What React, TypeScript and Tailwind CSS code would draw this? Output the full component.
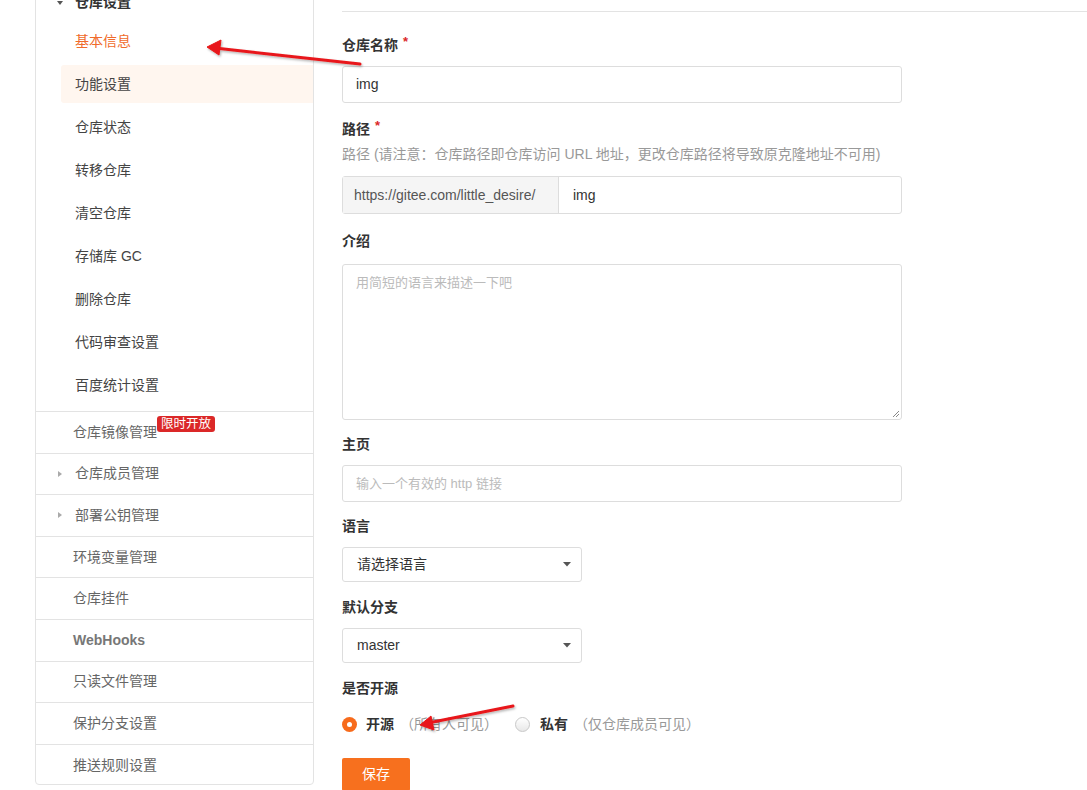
import React from 'react';

const subItems = ['基本信息', '功能设置', '仓库状态', '转移仓库', '清空仓库', '存储库 GC', '删除仓库', '代码审查设置', '百度统计设置'];

const groupItems: { label: string; caret?: boolean; badge?: string }[] = [
  { label: '仓库镜像管理', badge: '限时开放' },
  { label: '仓库成员管理', caret: true },
  { label: '部署公钥管理', caret: true },
  { label: '环境变量管理' },
  { label: '仓库挂件' },
  { label: 'WebHooks' },
  { label: '只读文件管理' },
  { label: '保护分支设置' },
  { label: '推送规则设置' },
];

const Caret: React.FC<{ down?: boolean }> = ({ down }) => (
  <svg width="8" height="8" viewBox="0 0 8 8" className="shrink-0">
    {down ? <path d="M1 2 L7 2 L4 6 Z" fill="#555" /> : <path d="M2 1 L6 4 L2 7 Z" fill="#aaa" />}
  </svg>
);

const Sidebar: React.FC = () => (
  <div className="w-[279px] shrink-0 -mt-[18px] h-[803px] border border-[#e3e3e3] rounded-b-[4px] bg-white">
    <div className="h-[39px] flex items-center pl-[20px] gap-[11px] text-[14px] font-bold text-[#333]">
      <Caret down />
      <span>仓库设置</span>
    </div>
    <div className="flex flex-col gap-[5px] pl-[25px] pb-[7px]">
      {subItems.map((s, i) => (
        <div
          key={s}
          className={`h-[38px] flex items-center pl-[14px] text-[14px] rounded-l-[3px] ${i === 0 ? 'text-[#f06b2b]' : 'text-[#444]'} ${i === 1 ? 'bg-[#fff6ef]' : ''}`}
        >
          {s}
        </div>
      ))}
    </div>
    {groupItems.map(g => (
      <div key={g.label} className="h-[41.6px] border-t border-[#e3e3e3] flex items-center text-[14px] text-[#666]">
        {g.caret ? (
          <div className="flex items-center pl-[20px] gap-[11px]">
            <Caret />
            <span>{g.label}</span>
          </div>
        ) : (
          <div className={`pl-[37px] flex items-center ${g.label === 'WebHooks' ? 'font-bold text-[#777]' : ''}`}>
            <span>{g.label}</span>
            {g.badge && (
              <span className="relative -top-[8px] bg-[#db2828] text-white text-[12.5px] leading-[16px] px-[4px] rounded-[3px]">{g.badge}</span>
            )}
          </div>
        )}
      </div>
    ))}
  </div>
);

const Label: React.FC<{ text: string; required?: boolean }> = ({ text, required }) => (
  <div className="text-[14px] font-bold text-[#333] leading-[20px] flex items-start">
    {text}
    {required && <span className="text-[#db2828] ml-[5px] text-[13px] leading-[14px]">*</span>}
  </div>
);

const Select: React.FC<{ value: string }> = ({ value }) => (
  <div className="w-[240px] h-[35px] border border-[#ddd] rounded-[3px] flex items-center justify-between pl-[14px] pr-[10px] text-[14px] text-[#333]">
    <span>{value}</span>
    <svg width="8" height="5" viewBox="0 0 8 5"><path d="M0 0 L8 0 L4 4.5 Z" fill="#555" /></svg>
  </div>
);

const Radio: React.FC<{ checked?: boolean }> = ({ checked }) =>
  checked ? (
    <span className="block w-[15px] h-[15px] rounded-full bg-[#f76b1c] flex items-center justify-center shrink-0">
      <span className="block w-[5px] h-[5px] rounded-full bg-white" />
    </span>
  ) : (
    <span className="block w-[15px] h-[15px] rounded-full border border-[#c8c8c8] bg-gradient-to-b from-white to-[#e8e8e8] shrink-0" />
  );

const App: React.FC = () => {
  return (
    <div
      className="relative w-[1087px] h-[790px] overflow-hidden bg-white flex"
      style={{ fontFamily: '"Liberation Sans", "Noto Sans CJK SC", sans-serif' }}
    >
      <div className="w-[35px] shrink-0" />
      <Sidebar />
      <div className="flex-1 pl-[28px]">
        <div className="mt-[11px] border-t border-[#e3e3e3]" />
        <div className="w-[560px] flex flex-col pt-[23px]">
          <Label text="仓库名称" required />
          <div className="mt-[11px] h-[37px] border border-[#ddd] rounded-[3px] flex items-center px-[13px] text-[14px] text-[#333]">img</div>

          <div className="mt-[16px]"><Label text="路径" required /></div>
          <div className="mt-[5px] text-[14px] text-[#999] leading-[20px]">路径 (请注意：仓库路径即仓库访问 URL 地址，更改仓库路径将导致原克隆地址不可用)</div>
          <div className="mt-[12px] h-[38px] border border-[#ddd] rounded-[3px] flex text-[14px] text-[#333]">
            <div className="w-[216px] bg-[#f5f5f5] border-r border-[#ddd] flex items-center pl-[11px] text-[#555]">https://gitee.com/little_desire/</div>
            <div className="flex items-center pl-[14px]">img</div>
          </div>

          <div className="mt-[17px]"><Label text="介绍" /></div>
          <div className="mt-[13px] h-[156px] border border-[#ddd] rounded-[3px] relative px-[13px] pt-[8px] text-[13px] text-[#bbb]">
            用简短的语言来描述一下吧
            <svg width="8" height="8" viewBox="0 0 8 8" className="absolute right-[1px] bottom-[1px]">
              <path d="M7 1 L1 7 M7 4 L4 7" stroke="#888" strokeWidth="1" />
            </svg>
          </div>

          <div className="mt-[14px]"><Label text="主页" /></div>
          <div className="mt-[11px] h-[37px] border border-[#ddd] rounded-[3px] flex items-center px-[13px] text-[13px] text-[#bbb]">输入一个有效的 http 链接</div>

          <div className="mt-[14px]"><Label text="语言" /></div>
          <div className="mt-[11px]"><Select value="请选择语言" /></div>

          <div className="mt-[15px]"><Label text="默认分支" /></div>
          <div className="mt-[11px]"><Select value="master" /></div>

          <div className="mt-[15px]"><Label text="是否开源" /></div>
          <div className="mt-[16px] flex items-center text-[14px]">
            <Radio checked />
            <span className="ml-[9px] font-bold text-[#333]">开源</span>
            <span className="ml-[6px] text-[#999]">（所有人可见）</span>
            <span className="ml-[17px]"><Radio /></span>
            <span className="ml-[10px] font-bold text-[#333]">私有</span>
            <span className="ml-[6px] text-[#999]">（仅仓库成员可见）</span>
          </div>

          <div className="mt-[23px]">
            <button className="w-[68px] h-[33px] bg-[#f7701e] text-white text-[14px] rounded-[2px]">保存</button>
          </div>
        </div>
      </div>

      <svg className="absolute inset-0 pointer-events-none" width="1087" height="790">
        <defs>
          <filter id="sh" x="-10%" y="-50%" width="120%" height="200%">
            <feDropShadow dx="1" dy="1.5" stdDeviation="1.2" floodColor="#000" floodOpacity="0.3" />
          </filter>
        </defs>
        <g filter="url(#sh)" fill="#e8191a" stroke="#e8191a">
          <line x1="360" y1="64" x2="215" y2="48" strokeWidth="3" strokeLinecap="round" />
          <path d="M207 47 L221 40 L219 55 Z" strokeWidth="1" strokeLinejoin="round" />
          <line x1="513" y1="706" x2="428" y2="723" strokeWidth="3" strokeLinecap="round" />
          <path d="M420 725 L431 716 L434 730 Z" strokeWidth="1" strokeLinejoin="round" />
        </g>
      </svg>
    </div>
  );
};

export default App;
